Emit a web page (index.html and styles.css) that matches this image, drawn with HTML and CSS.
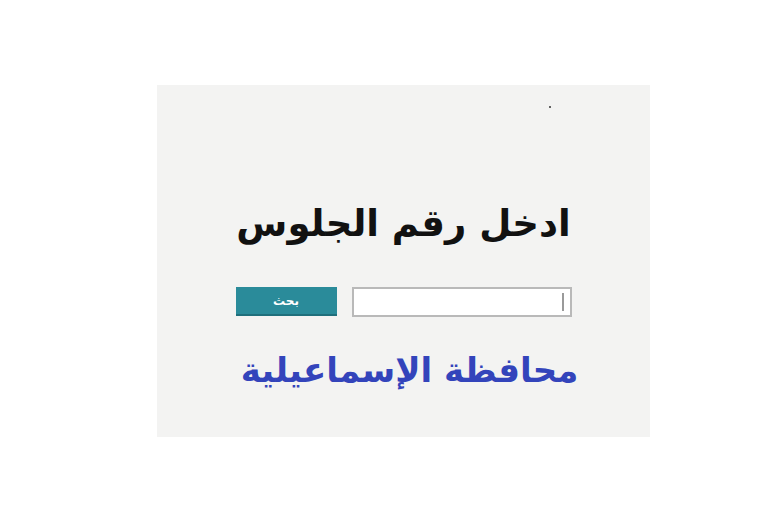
FILE: index.html
```html
<!DOCTYPE html>
<html lang="ar">
<head>
    <meta charset="UTF-8">
    <title>نتيجة الشهادة الإعدادية</title>
    <link rel="stylesheet" href="styles.css">
</head>
<body>
    <div class="panel">
        <span class="dot"></span>
        <h1 class="title" dir="rtl">ادخل رقم الجلوس</h1>
        <div class="search-row">
            <button class="search-btn">بحث</button>
            <label class="input-wrap">
                <input type="text" class="seat-input" dir="rtl" value="">
                <span class="caret"></span>
            </label>
        </div>
        <p class="gov" dir="rtl">محافظة الإسماعيلية</p>
    </div>
</body>
</html>
```
FILE: styles.css
```css
body {
    margin: 0;
    background-color: #ffffff;
    font-family: "DejaVu Sans", sans-serif;
}

.panel {
    position: relative;
    width: 493px;
    height: 352px;
    margin: 85px 0 0 157px;
    background-color: #f3f3f2;
    display: flex;
    flex-direction: column;
    align-items: center;
    box-sizing: border-box;
    padding-top: 112px;
}

.dot {
    position: absolute;
    top: 21px;
    left: 392px;
    width: 2px;
    height: 2px;
    background-color: #333;
    border-radius: 50%;
}

.title {
    margin: 0;
    font-size: 37px;
    font-weight: bold;
    color: #111;
    line-height: 54px;
}

.search-row {
    display: flex;
    gap: 15px;
    margin-top: 36px;
}

.input-wrap {
    position: relative;
    display: block;
}

.seat-input {
    display: block;
    width: 220px;
    height: 30px;
    box-sizing: border-box;
    border: 2px solid #b9b9b9;
    background-color: #fff;
    padding: 0 6px;
}

.caret {
    position: absolute;
    top: 6px;
    right: 8px;
    width: 2px;
    height: 18px;
    background-color: #9a9a9a;
}

.search-btn {
    width: 101px;
    height: 29px;
    border: none;
    border-bottom: 2px solid #1f6f7c;
    background-color: #2a8b9a;
    color: #fff;
    font-family: "DejaVu Sans", sans-serif;
    font-size: 12px;
    font-weight: bold;
}

.gov {
    margin: 26px 0 0 12px;
    font-size: 34px;
    font-weight: bold;
    color: #3344bb;
    line-height: 54px;
}
```
